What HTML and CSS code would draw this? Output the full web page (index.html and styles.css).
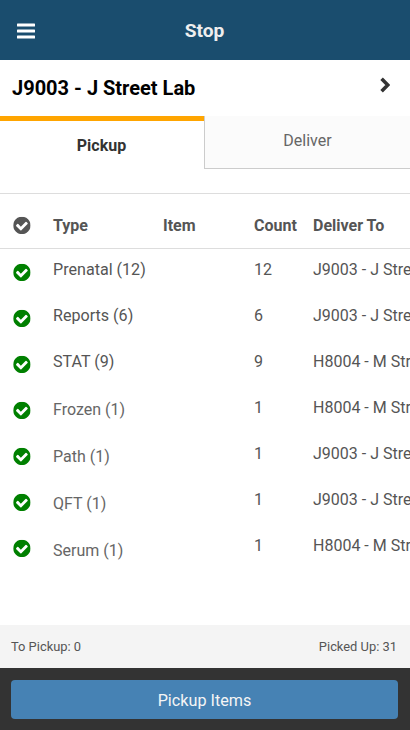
FILE: index.html
```html
<!DOCTYPE html>
<html lang="en">
<head>
<meta charset="utf-8">
<meta name="viewport" content="width=device-width">
<title>Stop</title>
<link rel="stylesheet" href="styles.css">
</head>
<body>
<svg class="defs" aria-hidden="true">
  <symbol id="check" viewBox="0 0 1536 1536"><path d="M1284 606q0-28-18-46l-91-90q-19-19-45-19t-45 19l-408 407-226-226q-19-19-45-19t-45 19l-91 90q-18 18-18 46 0 27 18 45l362 362q19 19 45 19 27 0 46-19l543-543q18-18 18-45zm252 162q0 209-103 385.5t-279.5 279.5-385.5 103-385.5-103-279.5-279.5-103-385.5 103-385.5 279.5-279.5 385.5-103 385.5 103 279.5 279.5 103 385.5z"/></symbol>
</svg>
<header class="topbar">
  <svg class="menu" viewBox="0 0 18 16"><rect y="0.5" width="18" height="3" rx=".6"/><rect y="6.5" width="18" height="3" rx=".6"/><rect y="12.5" width="18" height="3" rx=".6"/></svg>
  <h1 class="title">Stop</h1>
</header>
<div class="stop">
  <h2 class="stop-name">J9003 - J Street Lab</h2>
  <svg class="chevron" viewBox="0 0 10 16"><path d="M1.6 1.8 7.8 8 1.6 14.2"/></svg>
</div>
<nav class="tabs">
  <div class="tab active">Pickup</div>
  <div class="tab">Deliver</div>
</nav>
<main class="list">
  <div class="row head"><svg class="check" viewBox="0 0 18 19"><use href="#check" x="0.2" y="0.7" width="17.4" height="17.4"/></svg><span>Type</span><span>Item</span><span>Count</span><span>Deliver To</span></div>
  <div class="row"><svg class="check" viewBox="0 0 18 19"><use href="#check" x="0.2" y="0.7" width="17.4" height="17.4"/></svg><span class="type">Prenatal (12)</span><span></span><span>12</span><span class="dest">J9003 - J Street Lab</span></div>
  <div class="row"><svg class="check" viewBox="0 0 18 19"><use href="#check" x="0.2" y="0.7" width="17.4" height="17.4"/></svg><span class="type">Reports (6)</span><span></span><span>6</span><span class="dest">J9003 - J Street Lab</span></div>
  <div class="row"><svg class="check" viewBox="0 0 18 19"><use href="#check" x="0.2" y="0.7" width="17.4" height="17.4"/></svg><span class="type">STAT (9)</span><span></span><span>9</span><span class="dest">H8004 - M Street Lab</span></div>
  <div class="row minor"><svg class="check" viewBox="0 0 18 19"><use href="#check" x="0.2" y="0.7" width="17.4" height="17.4"/></svg><span class="type">Frozen (1)</span><span></span><span>1</span><span class="dest">H8004 - M Street Lab</span></div>
  <div class="row minor"><svg class="check" viewBox="0 0 18 19"><use href="#check" x="0.2" y="0.7" width="17.4" height="17.4"/></svg><span class="type">Path (1)</span><span></span><span>1</span><span class="dest">J9003 - J Street Lab</span></div>
  <div class="row minor"><svg class="check" viewBox="0 0 18 19"><use href="#check" x="0.2" y="0.7" width="17.4" height="17.4"/></svg><span class="type">QFT (1)</span><span></span><span>1</span><span class="dest">J9003 - J Street Lab</span></div>
  <div class="row minor"><svg class="check" viewBox="0 0 18 19"><use href="#check" x="0.2" y="0.7" width="17.4" height="17.4"/></svg><span class="type">Serum (1)</span><span></span><span>1</span><span class="dest">H8004 - M Street Lab</span></div>
</main>
<div class="summary"><span>To Pickup: 0</span><span>Picked Up: 31</span></div>
<footer class="actions"><button class="primary">Pickup Items</button></footer>
</body>
</html>
```
FILE: styles.css
```css
* { box-sizing: border-box; }
body {
  margin: 0;
  height: 730px;
  display: flex;
  flex-direction: column;
  overflow: hidden;
  background: #fff;
  color: #555;
  font: 16px/20px Roboto, sans-serif;
}
.defs { display: none; }
.topbar {
  flex: none;
  height: 60px;
  padding: 1px 18px 0 17px;
  display: grid;
  grid-template-columns: 18px 1fr 18px;
  align-items: center;
  background: #1a4d6e;
}
.menu { width: 18px; height: 16px; fill: #fff; }
.title { margin: 0; text-align: center; font-size: 19.2px; font-weight: 700; color: #eee; }
.stop {
  flex: none;
  height: 56px;
  padding: 0 20px 0 12px;
  display: flex;
  align-items: center;
  justify-content: space-between;
}
.stop-name { margin: 0; font-size: 20px; font-weight: 700; color: #000; }
.chevron { width: 10px; height: 16px; margin-bottom: 7px; fill: none; stroke: #333; stroke-width: 3.6; }
.tabs { flex: none; height: 53px; display: grid; grid-template-columns: 204px 1fr; }
.tab {
  padding-top: 15px;
  text-align: center;
  color: #666;
  background: #fbfbfb;
  border-left: 1px solid #ccc;
  border-bottom: 1px solid #ccc;
}
.tab.active {
  padding-right: 1px;
  color: #333;
  font-weight: 700;
  background: #fff;
  border: 0;
  border-top: 5px solid #ffa500;
}
.list { flex: 1; margin-top: 24px; }
.row {
  height: 46px;
  padding: 11px 0 0 13px;
  display: grid;
  grid-template-columns: 40px 110px 91px 59px 97px;
  align-items: start;
  white-space: nowrap;
}
.head {
  height: 56px;
  padding-top: 22px;
  font-weight: 700;
  border-top: 1px solid #ddd;
  border-bottom: 1px solid #ddd;
}
.check { width: 18px; height: 19px; margin-top: 3px; fill: #008000; }
.head .check { margin-top: 0; fill: #555; }
.dest { overflow: hidden; }
.type { font-size: 16.1px; }
.minor .type { font-size: 16px; color: #666; padding-top: 2px; }
.minor + .minor .type { padding-top: 3px; }
.minor + .minor + .minor .type { padding-top: 4px; }
.minor + .minor + .minor + .minor .type { padding-top: 5px; }
.summary {
  flex: none;
  height: 43px;
  padding: 0 13px 0 11px;
  display: flex;
  align-items: center;
  justify-content: space-between;
  font-size: 12.9px;
  background: #f4f4f4;
}
.actions { flex: none; height: 62px; padding: 12px 12px 11px 11px; background: #333; }
.primary {
  display: block;
  width: 100%;
  height: 39px;
  padding: 3px 0 0;
  border: 0;
  border-radius: 4px;
  background: #4682b4;
  color: #f5f5f5;
  font: 16.2px/20px Roboto, sans-serif;
}
```
